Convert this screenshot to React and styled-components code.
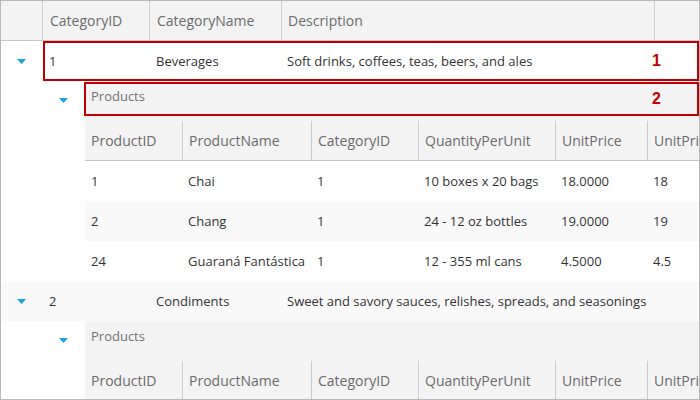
import React from 'react';
import styled, {createGlobalStyle} from 'styled-components';

const GlobalStyle = createGlobalStyle`
  body {
    margin: 0;
    background: #ffffff;
  }
`

const Grid = styled.div`
  position: relative;
  width: 700px;
  height: 400px;
  box-sizing: border-box;
  border: 1px solid #b9b9b9;
  overflow: hidden;
  font-family: "Open Sans", "Noto Sans", sans-serif;
  font-size: 13px;
  color: #333333;
  background: #ffffff;
`
const HeaderRow = styled.div`
  display: flex;
  height: 40px;
  box-sizing: border-box;
  background: #f3f3f3;
  border-bottom: 1px solid #c6c6c6;
  white-space: nowrap;
`
const HeaderCell = styled.div`
  flex: 0 0 ${p => p.w}px;
  box-sizing: border-box;
  display: flex;
  align-items: center;
  padding-left: ${p => p.pad || 6}px;
  border-left: ${p => p.first ? 'none' : '1px solid #cccccc'};
  color: #6b6b6b;
  font-size: 14px;
  overflow: hidden;
`
const Row = styled.div`
  display: flex;
  height: 40px;
  background: ${p => p.alt ? '#f9f9f9' : '#ffffff'};
  white-space: nowrap;
`
const Cell = styled.div`
  flex: 0 0 ${p => p.w}px;
  box-sizing: border-box;
  display: flex;
  align-items: center;
  justify-content: ${p => p.center ? 'center' : 'flex-start'};
  padding-left: ${p => p.center ? 0 : (p.pad || 6)}px;
  overflow: hidden;
`
const Detail = styled.div`
  display: flex;
`
const Indent = styled.div`
  flex: 0 0 ${p => p.w}px;
`
const DetailBody = styled.div`
  flex: 1;
  min-width: 0;
  display: grid;
  grid-template-columns: 43px 1fr;
`
const ArrowCell = styled.div`
  display: flex;
  justify-content: center;
  padding-top: 17px;
`
const Nested = styled.div`
  display: flex;
  flex-direction: column;
  min-width: 0;
`
const Caption = styled.div`
  height: 40px;
  box-sizing: border-box;
  background: #f3f3f3;
  padding: 6px 0 0 6px;
  color: #727272;
  font-size: 13px;
`
const Highlight = styled.div`
  position: absolute;
  left: ${p => p.x}px;
  top: ${p => p.y}px;
  width: ${p => p.w}px;
  height: ${p => p.h}px;
  box-sizing: border-box;
  border: 2px solid #c00000;
  display: flex;
  align-items: center;
  justify-content: flex-end;
  padding-right: 36px;
  color: #c00000;
  font-weight: 700;
  font-size: 16px;
  font-family: "Liberation Sans", Arial, sans-serif;
`

const Arrow = () => (
  <svg width="9" height="5" viewBox="0 0 9 5">
    <polygon points="0,0 9,0 4.5,5" fill="#1ba1e2"/>
  </svg>
)

const outerCols = [
  {key: 'id', title: 'CategoryID', w: 107, pad: 6},
  {key: 'name', title: 'CategoryName', w: 132, pad: 6},
  {key: 'desc', title: 'Description', w: 373, pad: 5},
  {key: 'x', title: '', w: 45}
]

const innerCols = [
  {key: 'id', title: 'ProductID', w: 97},
  {key: 'name', title: 'ProductName', w: 129},
  {key: 'cat', title: 'CategoryID', w: 107},
  {key: 'qty', title: 'QuantityPerUnit', w: 137},
  {key: 'price', title: 'UnitPrice', w: 92},
  {key: 'price2', title: 'UnitPrice', w: 60}
]

const categories = [
  {
    id: '1',
    name: 'Beverages',
    desc: 'Soft drinks, coffees, teas, beers, and ales',
    products: [
      {id: '1', name: 'Chai', cat: '1', qty: '10 boxes x 20 bags', price: '18.0000', price2: '18'},
      {id: '2', name: 'Chang', cat: '1', qty: '24 - 12 oz bottles', price: '19.0000', price2: '19'},
      {id: '24', name: 'Guaraná Fantástica', cat: '1', qty: '12 - 355 ml cans', price: '4.5000', price2: '4.5'}
    ]
  },
  {
    id: '2',
    name: 'Condiments',
    desc: 'Sweet and savory sauces, relishes, spreads, and seasonings',
    products: []
  }
]

export default function App() {
  return (
    <Grid>
      <GlobalStyle/>
      <HeaderRow>
        <HeaderCell first w={41}/>
        {outerCols.map(c => (
          <HeaderCell key={c.key} w={c.w} pad={c.pad + 1}>{c.title}</HeaderCell>
        ))}
      </HeaderRow>
      {categories.map((cat, i) => (
        <React.Fragment key={cat.id}>
          <Row alt={i % 2 === 1}>
            <Cell w={41} center><Arrow/></Cell>
            {outerCols.map(c => (
              <Cell key={c.key} w={c.w} pad={c.pad + 1}>{cat[c.key]}</Cell>
            ))}
          </Row>
          <Detail>
            <Indent w={41}/>
            <DetailBody>
              <ArrowCell><Arrow/></ArrowCell>
              <Nested>
                <Caption>Products</Caption>
                <HeaderRow>
                  {innerCols.map((c, j) => (
                    <HeaderCell key={c.key} w={c.w} first={j === 0}>{c.title}</HeaderCell>
                  ))}
                </HeaderRow>
                {cat.products.map((p, j) => (
                  <Row key={p.id} alt={j % 2 === 1}>
                    {innerCols.map(c => (
                      <Cell key={c.key} w={c.w}>{p[c.key]}</Cell>
                    ))}
                  </Row>
                ))}
              </Nested>
            </DetailBody>
          </Detail>
        </React.Fragment>
      ))}
      <Highlight x={42} y={40} w={656} h={40}>1</Highlight>
      <Highlight x={83} y={81} w={615} h={34}>2</Highlight>
    </Grid>
  );
}
